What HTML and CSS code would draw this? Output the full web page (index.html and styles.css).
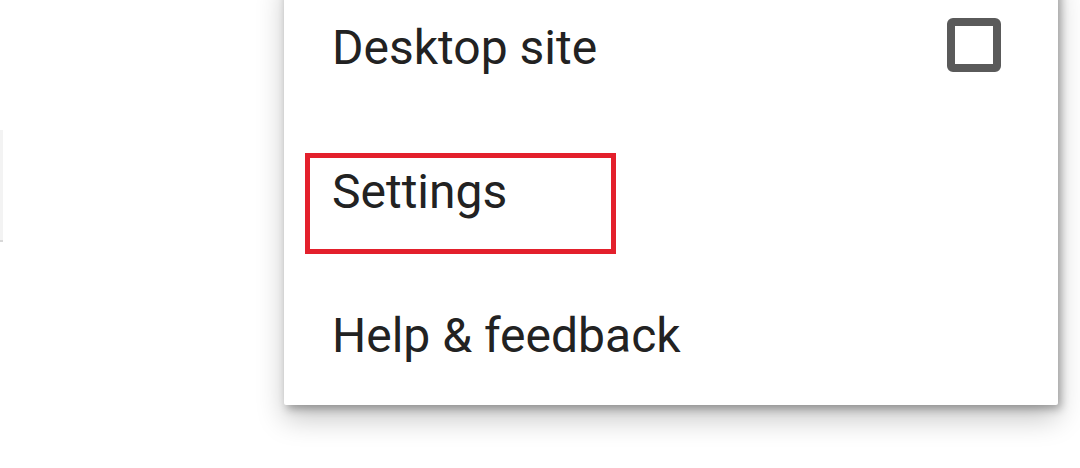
FILE: index.html
```html
<!DOCTYPE html>
<html lang="en">
<head>
<meta charset="utf-8">
<title>Menu</title>
<link rel="stylesheet" href="styles.css">
</head>
<body>
<div class="page">
  <div class="sliver"></div>
</div>
<div class="menu">
  <div class="item">
    <span class="label">Desktop site</span>
    <span class="checkbox"></span>
  </div>
  <div class="item">
    <span class="label">Settings</span>
    <span class="highlight"></span>
  </div>
  <div class="item">
    <span class="label">Help &amp; feedback</span>
  </div>
</div>
</body>
</html>
```
FILE: styles.css
```css
html, body {
  margin: 0;
  padding: 0;
  background: #ffffff;
  width: 1080px;
  height: 468px;
  overflow: hidden;
}
body {
  font-family: Roboto, "Noto Sans", sans-serif;
  color: #212121;
  position: relative;
}
.page {
  padding-top: 130px;
}
.sliver {
  width: 3px;
  height: 110px;
  background: #f3f3f3;
  border-bottom: 2px solid #d8d8d8;
}
.menu {
  position: absolute;
  top: -27px;
  left: 284px;
  width: 774px;
  background: #ffffff;
  border-radius: 2px;
  box-shadow: 3px 4px 8px rgba(0,0,0,0.3), 0 14px 28px rgba(0,0,0,0.22);
}
.item {
  position: relative;
  height: 144px;
  display: flex;
  align-items: center;
  justify-content: space-between;
  padding: 0 57px 0 48px;
}
.label {
  font-size: 48px;
  line-height: 1;
  margin-top: 6px;
  color: #222222;
}
.checkbox {
  width: 38px;
  height: 38px;
  border: 8px solid #5a5a5a;
  border-radius: 6px;
}
.highlight {
  position: absolute;
  left: 21px;
  top: 36px;
  width: 301px;
  height: 91px;
  border: 5px solid #e3202c;
}
```
